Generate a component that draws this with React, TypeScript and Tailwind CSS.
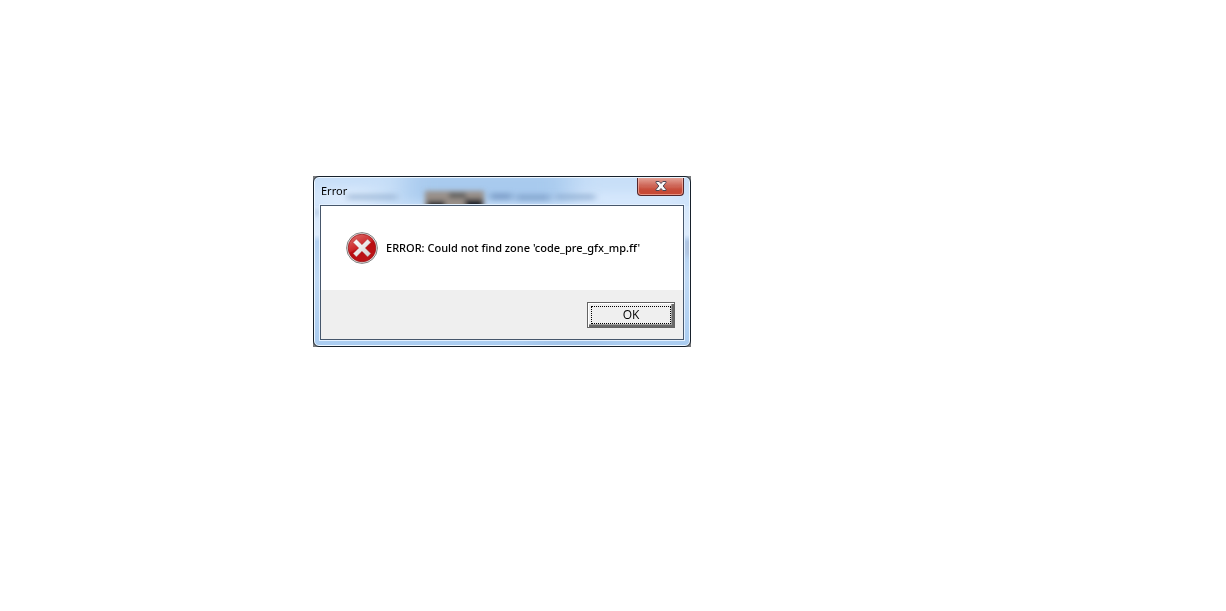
import { useState } from "react";

// Blurred shapes of the page that lies behind the glass frame
const GlassBackdrop = () => (
  <svg
    className="pointer-events-none absolute inset-0 h-full w-full"
    viewBox="0 0 374 167"
    preserveAspectRatio="none"
    aria-hidden="true"
  >
    <defs>
      <filter id="soft" x="-20%" y="-60%" width="140%" height="220%">
        <feGaussianBlur stdDeviation="2.4" />
      </filter>
      <filter id="text" x="-20%" y="-100%" width="140%" height="300%">
        <feGaussianBlur stdDeviation="3.5 2.4" />
      </filter>
      <filter id="wide" x="-30%" y="-60%" width="160%" height="220%">
        <feGaussianBlur stdDeviation="14 5" />
      </filter>
      <linearGradient id="side" x1="0" y1="0" x2="0" y2="1">
        <stop offset="0" stopColor="#cfe4fb" />
        <stop offset="0.34" stopColor="#dcebfc" />
        <stop offset="0.38" stopColor="#b4d2f2" />
        <stop offset="0.6" stopColor="#c0daf5" />
        <stop offset="1" stopColor="#aaccf0" />
      </linearGradient>
    </defs>
    <rect width="374" height="167" fill="url(#side)" />
    <rect width="374" height="28" fill="#c8dff8" />
    <g filter="url(#wide)">
      <rect x="90" y="-6" width="165" height="30" fill="#a8caee" />
      <rect x="0" y="10" width="60" height="22" fill="#dbeafc" />
      <rect x="262" y="14" width="112" height="18" fill="#d5e7fc" />
      <rect x="220" y="160" width="70" height="8" fill="#9fc0e6" />
    </g>
    <g filter="url(#text)">
      <rect x="32" y="16" width="50" height="6" fill="#8fabcd" opacity="0.6" />
      <rect x="175" y="15" width="22" height="7" fill="#6f92be" opacity="0.7" />
      <rect x="201" y="16" width="34" height="7" fill="#7899c4" opacity="0.65" />
      <rect x="240" y="16" width="40" height="6" fill="#83a3ca" opacity="0.6" />
    </g>
    <g filter="url(#soft)">
      <rect x="110" y="13" width="59" height="20" fill="#988f88" />
      <rect x="112" y="23" width="18" height="12" fill="#1b212b" />
      <rect x="150" y="21" width="18" height="14" fill="#1b212b" />
      <rect x="134" y="15" width="17" height="5" fill="#494a4e" opacity="0.8" />
      <rect x="371" y="62" width="5" height="16" fill="#a8aec4" opacity="0.6" />
      <rect x="0" y="32" width="3" height="5" fill="#94accb" />
    </g>
  </svg>
);

const CloseGlyph = () => (
  <svg className="h-[10px] w-[12px]" viewBox="0 0 12 10" aria-hidden="true">
    <path
      d="M1 .5h3.2L6 2.5 7.8.5H11v1L8.2 5 11 8.5v1H7.8L6 7.5l-1.8 2H1v-1L3.8 5 1 1.5z"
      fill="#fafafa"
      stroke="#4d4654"
      strokeWidth="1"
      strokeLinejoin="round"
    />
  </svg>
);

const ErrorIcon = () => (
  <svg className="h-8 w-8 shrink-0" viewBox="0 0 32 32" aria-hidden="true">
    <defs>
      <linearGradient id="red" x1="0.2" y1="0" x2="0.7" y2="1">
        <stop offset="0" stopColor="#dd6a68" />
        <stop offset="0.45" stopColor="#cb2528" />
        <stop offset="0.5" stopColor="#b90c10" />
        <stop offset="1" stopColor="#bd1518" />
      </linearGradient>
      <linearGradient id="cross" x1="0" y1="0" x2="1" y2="1">
        <stop offset="0" stopColor="#ffffff" />
        <stop offset="1" stopColor="#d3d0d0" />
      </linearGradient>
    </defs>
    <circle cx="16" cy="16" r="15.4" fill="#e9e9e9" stroke="#777" strokeWidth="0.9" />
    <circle cx="16" cy="16" r="13.8" fill="url(#red)" stroke="#9b1719" strokeWidth="0.8" />
    <path
      d="M10.4 7.1 16 12.7l5.6-5.6 3.3 3.3-5.6 5.6 5.6 5.6-3.3 3.3-5.6-5.6-5.6 5.6-3.3-3.3 5.6-5.6-5.6-5.6z"
      fill="url(#cross)"
      stroke="#a3282a"
      strokeWidth="0.4"
    />
  </svg>
);

const App = () => {
  const [open, setOpen] = useState(true);
  const close = () => setOpen(false);

  return (
    <main className="relative min-h-screen bg-white font-['Noto_Sans','Open_Sans',sans-serif] text-xs text-black">
      {open && (
        <div className="absolute left-[313px] top-[176px] w-[378px] bg-[#77797c]">
          <section
            role="alertdialog"
            aria-labelledby="dialog-title"
            aria-describedby="dialog-message"
            className="rounded-md border border-[#17212c] bg-[#eef7ff] p-px"
          >
            <div className="relative overflow-hidden rounded-[4px] px-[4px] pb-[4px]">
              <GlassBackdrop />
              <header className="relative flex h-[26px] items-start justify-between pl-[2px] pr-px">
                <h1 id="dialog-title" className="pt-[5px] text-[11px] leading-4">
                  Error
                </h1>
                <button
                  type="button"
                  aria-label="Close"
                  onClick={close}
                  className="-mt-px flex h-[19px] w-[47px] items-center justify-center rounded-b-[4px] border border-t-0 border-[#53262b] bg-linear-to-b from-[#e6aaa0] via-[#cf6a5c] via-45% to-[#d9694f] shadow-[inset_0_0_0_1px_rgba(255,205,195,0.55),inset_0_-9px_3px_-2px_rgba(184,42,26,0.5)]"
                >
                  <CloseGlyph />
                </button>
              </header>

              <div className="relative border border-[#e4f1ff]">
                <div className="border border-[#46566b]">
                  <div className="flex h-[84px] items-center gap-2 bg-white pl-[25px]">
                    <ErrorIcon />
                    <p id="dialog-message" className="whitespace-nowrap text-[11px] font-medium leading-4">
                      ERROR: Could not find zone 'code_pre_gfx_mp.ff'
                    </p>
                  </div>
                  <footer className="flex h-[49px] items-center justify-end bg-[#efefef] pr-2">
                    <button
                      type="button"
                      onClick={close}
                      className="h-[26px] w-[88px] border border-[#646464] bg-[#efefef] p-[3px] font-['Open_Sans',sans-serif] leading-4 shadow-[inset_1px_1px_0_#fff,inset_-2px_-2px_0_#696969,inset_-3px_-3px_0_#a0a0a0]"
                    >
                      <span className="flex h-full items-center justify-center border border-dotted border-black">
                        OK
                      </span>
                    </button>
                  </footer>
                </div>
              </div>
            </div>
          </section>
        </div>
      )}
    </main>
  );
};

export default App;
